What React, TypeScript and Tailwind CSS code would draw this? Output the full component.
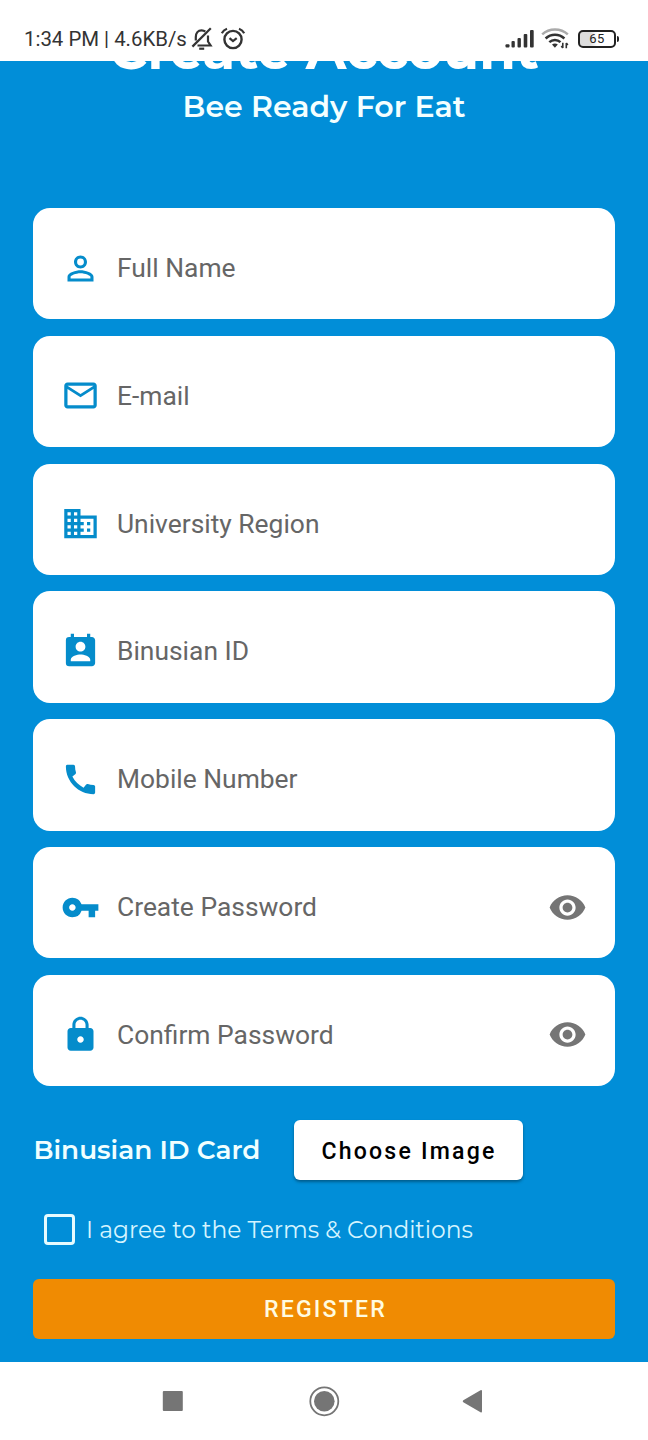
import type { ComponentType } from "react";
import {
  MdBusiness,
  MdCall,
  MdLock,
  MdMailOutline,
  MdPermContactCalendar,
  MdPersonOutline,
  MdRemoveRedEye,
  MdVpnKey,
} from "react-icons/md";

type Field = {
  label: string;
  icon: ComponentType<{ className?: string }>;
  secret?: boolean;
};

const fields: Field[] = [
  { label: "Full Name", icon: MdPersonOutline },
  { label: "E-mail", icon: MdMailOutline },
  { label: "University Region", icon: MdBusiness },
  { label: "Binusian ID", icon: MdPermContactCalendar },
  { label: "Mobile Number", icon: MdCall },
  { label: "Create Password", icon: MdVpnKey, secret: true },
  { label: "Confirm Password", icon: MdLock, secret: true },
];

function BellOffIcon() {
  return (
    <svg className="ml-[4px] h-[24px] w-[22px]" viewBox="0 0 22 24" fill="none" stroke="#333" strokeWidth="2.2">
      <path d="M4.8 13.5V10C4.8 5.9 7 3.3 10.6 3.3c1.6 0 2.8.5 3.7 1.3M17 8.5v6l2.6 4H6.5" />
      <path d="M19.8 1.2 1.4 19.6" />
      <path d="M8.2 21.7h5" />
    </svg>
  );
}

function AlarmIcon() {
  return (
    <svg className="ml-[7px] h-[24px] w-[26px]" viewBox="0 0 26 24" fill="none" stroke="#333" strokeWidth="2.2">
      <circle cx="13" cy="12.5" r="8.6" strokeWidth="2.4" />
      <path d="M1.8 6.2Q3.5 3 7 1.7M24.2 6.2Q22.5 3 19 1.7" />
      <path d="m9.5 11.1 3.5 2.9 3.7-2.9" />
    </svg>
  );
}

function SignalIcon() {
  return (
    <svg className="h-[20px] w-[30px]" viewBox="0 0 30 20" fill="#333">
      <rect x="0.5" y="15.2" width="4" height="3.3" rx="1" />
      <rect x="6.5" y="12" width="3.3" height="6.5" rx="1" />
      <rect x="12.5" y="9" width="3.4" height="9.5" rx="1" />
      <rect x="18.7" y="5" width="3.6" height="13.5" rx="1" />
      <rect x="25" y="1" width="3.7" height="17.5" rx="1" />
    </svg>
  );
}

function WifiIcon() {
  return (
    <svg className="ml-[6px] h-[22px] w-[28px]" viewBox="0 0 28 22" fill="none" strokeWidth="2.5">
      <path d="M1.2 6.3C8.3-.2 19.7-.2 26.8 6.3" stroke="#aaa" />
      <path d="M4.6 10.5C10 5.4 18 5.4 23.4 10.5" stroke="#333" />
      <path d="M8.3 14.2c3.3-3 8-3 11.2 0" stroke="#333" />
      <path d="M11 16.6c1.7-1.4 4.2-1.4 5.8 0L13.9 19.8z" fill="#333" stroke="none" />
      <path d="M21.8 14.8v5.2M20.3 18l1.5 2M25.3 20.3v-5.2M26.8 17l-1.5-2" stroke="#333" strokeWidth="1.6" />
    </svg>
  );
}

function Battery() {
  return (
    <div className="ml-[9px] flex items-center">
      <div className="flex h-[18px] w-[38px] items-center justify-center rounded-[5px] border-2 border-[#222] bg-linear-to-r from-[#ddd] from-30% to-white to-50% pt-px text-[13px] leading-[14px] tracking-[0.5px] text-[#222]">
        65
      </div>
      <div className="ml-px h-[6px] w-[2px] rounded-r-sm bg-[#222]" />
    </div>
  );
}

function StatusBar() {
  return (
    <header className="flex h-[61px] shrink-0 items-center bg-white pt-[16px] pr-[29px] pl-[24px] text-[#333]">
      <span className="w-[163px] text-[20.4px] leading-[24px] whitespace-nowrap">1:34 PM | 4.6KB/s</span>
      <BellOffIcon />
      <AlarmIcon />
      <div className="ml-auto flex items-center">
        <SignalIcon />
        <WifiIcon />
        <Battery />
      </div>
    </header>
  );
}

function FieldRow({ label, icon: Icon, secret }: Field) {
  return (
    <label className="flex h-[111.4px] items-center rounded-[17px] bg-white px-[28px] pt-[9px]">
      <Icon className="size-[39px] shrink-0 text-[#058ccb]" />
      <span className="ml-[17px] text-[26.4px] leading-none text-[#666]">{label}</span>
      {secret && <MdRemoveRedEye className="ml-auto size-[39px] text-[#757575]" />}
    </label>
  );
}

function NavBar() {
  return (
    <nav className="flex h-[78px] shrink-0 items-center bg-white pl-[162px]">
      <svg className="h-[32px] w-[322px]" viewBox="0 0 322 32" fill="#757575">
        <rect x="0.8" y="6" width="20" height="20" rx="1" />
        <circle cx="162.3" cy="16.3" r="10.3" />
        <circle cx="162.3" cy="16.3" r="14" fill="none" stroke="#757575" strokeWidth="1.8" />
        <path d="M301.3 15.2 318.5 5.3q1.5-.7 1.5 1v20q0 1.700-1.500 1L301.300 17.200q-1.200-1 0-2z" />
      </svg>
    </nav>
  );
}

export default function App() {
  return (
    <div className="flex h-[1440px] w-[648px] flex-col overflow-hidden bg-white font-['Roboto',sans-serif]">
      <StatusBar />
      <main className="flex h-[1300.5px] shrink-0 flex-col overflow-hidden bg-[#018ed8] px-[33px]">
        <div className="flex h-[147px] flex-col items-center text-center font-['Montserrat','Inter',sans-serif] text-white">
          <h1 className="-mt-[46px] text-[53px] leading-[70px] font-bold whitespace-nowrap">Create Account</h1>
          <p className="mt-[2px] text-[30px] leading-[40px] font-semibold whitespace-nowrap text-[#f4ffff]">Bee Ready For Eat</p>
        </div>
        <div className="flex flex-col gap-[16.4px]">
          {fields.map((field) => (
            <FieldRow key={field.label} {...field} />
          ))}
        </div>
        <div className="mt-[34px] flex items-center">
          <span className="w-[261px] pl-[0.5px] font-['Montserrat','Inter',sans-serif] text-[26.3px] leading-none font-semibold whitespace-nowrap text-[#f0ffff]">
            Binusian ID Card
          </span>
          <button className="h-[60px] w-[229px] rounded-[6px] bg-white pt-[2px] pl-px text-[23.1px] leading-none font-medium tracking-[2.2px] whitespace-nowrap text-black shadow-[0_2px_3px_rgba(0,0,0,0.35)]">
            Choose Image
          </button>
        </div>
        <div className="mt-[33.5px] ml-[11px] flex items-center">
          <span className="size-[31px] rounded-[4px] border-[3px] border-[#e6fbff]" />
          <span className="ml-[11px] pt-[2px] font-['Montserrat','Inter',sans-serif] text-[23.35px] leading-none whitespace-nowrap text-[#d5f4ff]">
            I agree to the Terms &amp; Conditions
          </span>
        </div>
        <button className="mt-[34px] h-[60px] rounded-[6px] bg-[#f08b02] pt-[2px] pl-[3px] text-[23.1px] leading-none font-medium tracking-[2.2px] text-[#fffbe0]">
          REGISTER
        </button>
      </main>
      <NavBar />
    </div>
  );
}
